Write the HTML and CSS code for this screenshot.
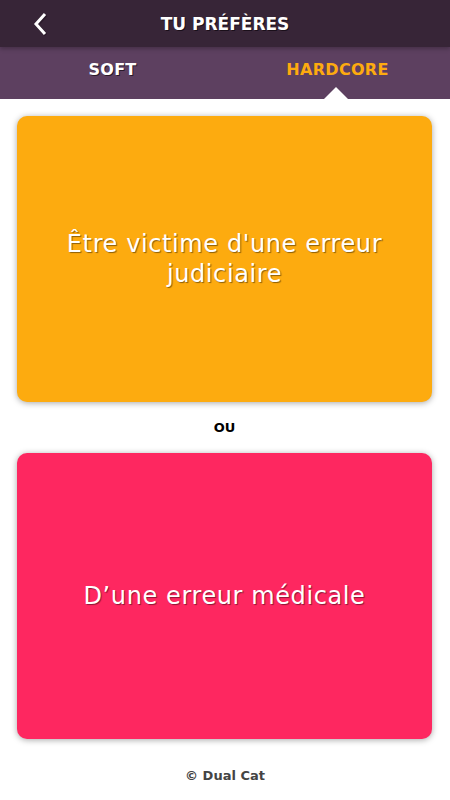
FILE: index.html
```html
<!DOCTYPE html>
<html lang="fr">
<head>
    <meta charset="UTF-8">
    <meta name="viewport" content="width=device-width, initial-scale=1.0">
    <title>Tu préfères</title>
    <link rel="stylesheet" href="styles.css">
</head>
<body>

    <header class="topbar">
        <button class="back" aria-label="Retour">
            <svg width="16" height="24" viewBox="0 0 16 24">
                <polyline points="12,2 3,12 12,22" fill="none" stroke="#2a1a2a" stroke-width="3.5" transform="translate(1,1)"/>
                <polyline points="12,2 3,12 12,22" fill="none" stroke="#fff" stroke-width="3"/>
            </svg>
        </button>
        <h1>TU PRÉFÈRES</h1>
    </header>

    <nav class="tabs">
        <div class="tab">SOFT</div>
        <div class="tab active">HARDCORE</div>
    </nav>

    <main class="content">
        <div class="card orange">Être victime d'une erreur judiciaire</div>
        <div class="ou">OU</div>
        <div class="card pink">D’une erreur médicale</div>
    </main>

    <footer class="footer">© Dual Cat</footer>

</body>
</html>
```

FILE: styles.css
```css
* { margin: 0; padding: 0; box-sizing: border-box; font-family: "DejaVu Sans", "Open Sans", sans-serif; }
body {
    background: #fff;
    width: 450px;
    height: 800px;
    display: flex;
    flex-direction: column;
}
.topbar {
    height: 47px;
    background: #372537;
    display: flex;
    align-items: center;
    justify-content: center;
    position: relative;
    box-shadow: 0 2px 4px rgba(0, 0, 0, 0.25);
    z-index: 2;
}
.back {
    position: absolute;
    left: 33px;
    top: 12px;
    background: none;
    border: none;
}
.topbar h1 {
    color: #fff;
    font-size: 17px;
    font-weight: bold;
    text-shadow: 1px 1px 0 #1a0f1a;
}
.tabs {
    height: 52px;
    background: #5d4060;
    display: flex;
}
.tab {
    flex: 1;
    display: flex;
    justify-content: center;
    padding-top: 13px;
    color: #fff;
    font-size: 16px;
    font-weight: bold;
    letter-spacing: 0.3px;
    text-shadow: 1px 1px 0 #2a1a2a;
    position: relative;
}
.tab.active { color: #fdab0f; text-shadow: none; }
.tab.active::after {
    content: "";
    position: absolute;
    bottom: 0;
    left: 50%;
    margin-left: -14px;
    border: 12px solid transparent;
    border-bottom-color: #fff;
    border-top: 0;
}
.content {
    padding: 17px 18px 0 17px;
    display: flex;
    flex-direction: column;
}
.card {
    height: 286px;
    border-radius: 10px;
    box-shadow: 0 1px 6px rgba(0, 0, 0, 0.35);
    display: flex;
    align-items: center;
    justify-content: center;
    text-align: center;
    padding: 0 20px;
    color: #fff;
    font-size: 24px;
    line-height: 30px;
    letter-spacing: 0.6px;
    text-shadow: 1px 1px 1px rgba(0, 0, 0, 0.45);
}
.orange { background: #fdab0f; }
.pink { background: #fe2760; }
.ou {
    height: 51px;
    display: flex;
    align-items: center;
    justify-content: center;
    font-size: 13px;
    font-weight: bold;
    color: #000;
}
.footer {
    text-align: center;
    margin-top: 29px;
    font-size: 13px;
    font-weight: bold;
    color: #444;
}
```
